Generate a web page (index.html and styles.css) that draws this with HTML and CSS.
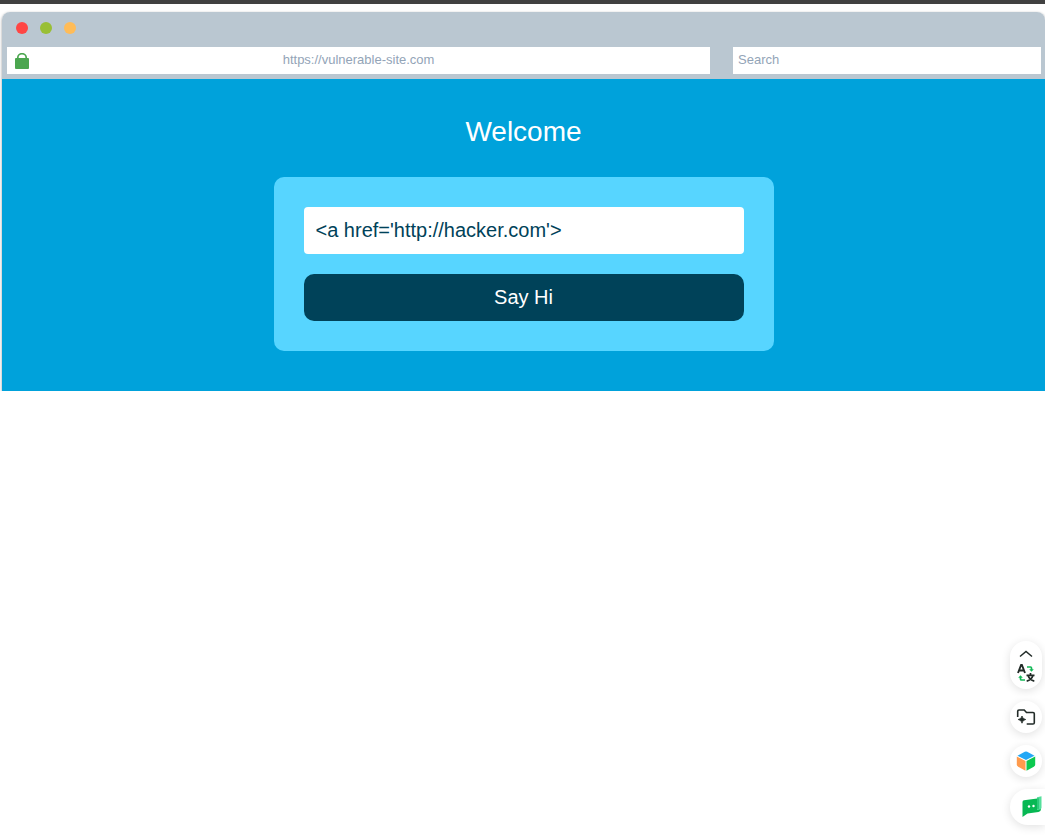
FILE: index.html
```html
<!DOCTYPE html>
<html lang="en">
<head>
<meta charset="utf-8">
<title>Welcome</title>
<link rel="stylesheet" href="styles.css">
</head>
<body>
<div class="top-strip"></div>
<main class="browser">
  <header class="browser-bar">
    <div class="dots">
      <span class="dot dot-red"></span>
      <span class="dot dot-green"></span>
      <span class="dot dot-amber"></span>
    </div>
    <div class="fields">
      <div class="address">
        <svg class="lock" viewBox="0 0 14 16" aria-hidden="true">
          <path d="M2.800 6V4.600a4.200 3.900 0 0 1 8.400 0V6" fill="none" stroke="#4ba64f" stroke-width="1.700"/>
          <rect y="5" width="14" height="11" rx="1" fill="#4ba64f"/>
        </svg>
        <input class="bar-input address-input" type="text" value="https://vulnerable-site.com" aria-label="Address">
      </div>
      <input class="bar-input search-input" type="search" placeholder="Search" aria-label="Search">
    </div>
  </header>
  <section class="site">
    <h1 class="title">Welcome</h1>
    <form class="card">
      <input class="name-input" type="text" value="&lt;a href='http://hacker.com'&gt;" aria-label="Name">
      <button class="submit" type="button">Say Hi</button>
    </form>
  </section>
</main>
<aside class="tools">
  <button class="tool tool-pill" type="button" aria-label="Translate">
    <svg width="18" height="36" viewBox="0 0 18 36" fill="none" aria-hidden="true">
      <path d="M3 9.500 9 4.500l6 5" stroke="#222b28" stroke-width="1.500"/>
      <path d="M1 26 4.100 18h.8L8 26M2.300 23.500h4.400" stroke="#222b28" stroke-width="1.900"/>
      <path d="M10 20h3.500q1 0 1 1v2" stroke="#15b958" stroke-width="1.700"/>
      <path d="M12.200 22.300h4.600l-2.300 2.400Z" fill="#15b958"/>
      <path d="M8 33H4.500q-1 0-1-1v-2" stroke="#15b958" stroke-width="1.700"/>
      <path d="M1.200 30.700h4.600l-2.300-2.400Z" fill="#15b958"/>
      <path d="M13.500 26v2M9.500 28.300h8M11 28.500q1.600 4.500 6.300 5.600M16 28.500q-1.500 4.500-6.300 5.600" stroke="#222b28" stroke-width="1.700"/>
    </svg>
  </button>
  <button class="tool" type="button" aria-label="Add to collection">
    <svg width="20" height="18" viewBox="0 0 20 18" fill="none" aria-hidden="true">
      <path d="M1.700 9V3.200Q1.700 2 3 2h5.200l2.300 2.500H17q1.300 0 1.300 1.300v8.900q0 1.300-1.300 1.300h-6.300" stroke="#222b28" stroke-width="1.600"/>
      <path d="M6 8q.5 3 3.700 3.500Q6.500 12 6 15.200 5.500 12 2.200 11.500 5.500 11 6 8Z" fill="#222b28" stroke="#222b28" stroke-width=".8"/>
    </svg>
  </button>
  <button class="tool" type="button" aria-label="Apps">
    <svg width="20" height="20" viewBox="0 0 20 20" aria-hidden="true">
      <path d="M1.500 4.700 8.800.700q1.200-.6 2.400 0l7.300 4L10 9Z" fill="#24a8f5"/>
      <path d="M.8 5.500 9.500 10v9.700l-7.300-3.900Q.8 15 .8 13.800Z" fill="#ff9b4d"/>
      <path d="M19.200 5.500 10.500 10v9.700l7.300-3.900q1.400-.8 1.400-2Z" fill="#0cc94f"/>
    </svg>
  </button>
  <button class="tool tool-chat" type="button" aria-label="Chat">
    <svg width="22" height="22" viewBox="0 0 22 22" aria-hidden="true">
      <path d="M1.500 6Q1.500 4.500 3 4.300L20 2v11q0 2.500-2.500 3L6.500 17.500l-5 3.500Z" fill="#07b853"/>
      <path d="M16 1.200 20.500.3v11.500q0 1.300-1.500 1.600l-3 .6Z" fill="#55df9b"/>
      <path d="M16 2.300h2v10.500l-2 .4Z" fill="#2bc878"/>
      <circle cx="8" cy="10.500" r="1.200" fill="#fff"/>
      <circle cx="12.500" cy="10" r="1.200" fill="#fff"/>
    </svg>
  </button>
</aside>
</body>
</html>
```
FILE: styles.css
```css
* {
  box-sizing: border-box;
}

body {
  margin: 0;
  background: #fff;
  font-family: "Liberation Sans", Arial, sans-serif;
  overflow-x: hidden;
}

.top-strip {
  height: 4px;
  background: #414141;
}

.browser {
  margin: 8px 0 0 2px;
  border-radius: 8px 8px 0 0;
  box-shadow: 0 1px 3px rgba(0, 0, 0, 0.4);
}

.browser-bar {
  padding: 10px 4px 5px 5px;
  border-radius: 8px 8px 0 0;
  background: #bac7d1;
}

.dots {
  display: flex;
  gap: 12px;
  padding: 0 9px 13px;
}

.dot {
  width: 12px;
  height: 12px;
  border-radius: 50%;
}

.dot-red {
  background: #ff4644;
}

.dot-green {
  background: #99bf35;
}

.dot-amber {
  background: #ffbc58;
}

.fields {
  display: flex;
  gap: 23px;
}

.address {
  position: relative;
  width: 68%;
}

.lock {
  position: absolute;
  left: 8px;
  top: 6px;
  width: 14px;
  height: 16px;
}

.bar-input {
  display: block;
  min-width: 0;
  height: 27px;
  padding: 0 5px 2px;
  border: 0;
  border-radius: 0;
  background: #fff;
  color: #93a4b7;
  font: 13px "Liberation Sans", Arial, sans-serif;
  appearance: none;
}

.bar-input::placeholder {
  color: #93a4b7;
}

.address-input {
  width: 100%;
  text-align: center;
}

.search-input {
  flex: 1;
}

.site {
  display: flex;
  flex-direction: column;
  align-items: center;
  gap: 28px;
  padding: 36px 20px 40px;
  background: #00a2db;
}

.title {
  margin: 0;
  color: #fff;
  font-size: 28px;
  font-weight: 400;
  line-height: 34px;
}

.card {
  display: flex;
  flex-direction: column;
  gap: 20px;
  width: 100%;
  max-width: 500px;
  padding: 30px;
  border-radius: 10px;
  background: #57d5ff;
}

.name-input,
.submit {
  width: 100%;
  height: 47px;
  padding: 0 12px;
  border: 0;
  font: 20px "Liberation Sans", Arial, sans-serif;
}

.name-input {
  border-radius: 4px;
  background: #fff;
  color: #004259;
}

.submit {
  border-radius: 10px;
  background: #004259;
  color: #fff;
}

.tools {
  display: flex;
  position: fixed;
  right: 0;
  bottom: 14px;
  flex-direction: column;
  align-items: flex-end;
  gap: 12px;
}

.tool {
  display: flex;
  align-items: center;
  justify-content: center;
  width: 32px;
  height: 32px;
  margin-right: 3px;
  padding: 0;
  border: 0;
  border-radius: 16px;
  background: #fff;
  box-shadow: 0 2px 10px rgba(0, 0, 0, 0.12);
}

.tool-pill {
  height: 48px;
}

.tool-chat {
  justify-content: flex-end;
  width: 35px;
  height: 36px;
  margin-right: 0;
  padding-right: 2px;
  border-radius: 18px 0 0 18px;
}
```
